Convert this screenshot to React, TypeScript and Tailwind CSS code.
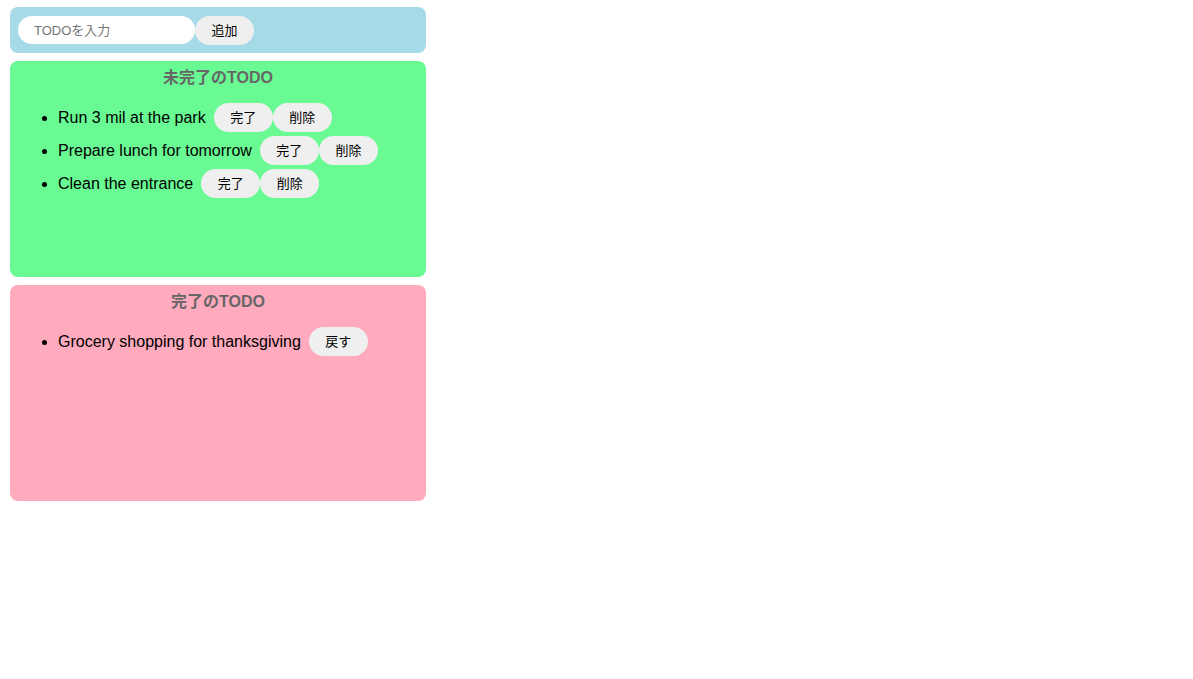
import React, { useState } from 'react';

const font = { fontFamily: '"Liberation Sans", "Noto Sans CJK JP", sans-serif' };

const btn =
  'h-[29px] rounded-full bg-[#efefef] px-[16.5px] text-[13px] leading-none text-black border-none';

const App = () => {
  const [text, setText] = useState('');
  const [incomplete, setIncomplete] = useState<string[]>([
    'Run 3 mil at the park',
    'Prepare lunch for tomorrow',
    'Clean the entrance',
  ]);
  const [complete, setComplete] = useState<string[]>(['Grocery shopping for thanksgiving']);

  const add = () => {
    if (!text) return;
    setIncomplete([...incomplete, text]);
    setText('');
  };

  const remove = (i: number) => setIncomplete(incomplete.filter((_, idx) => idx !== i));

  const done = (i: number) => {
    setComplete([...complete, incomplete[i]]);
    remove(i);
  };

  const back = (i: number) => {
    setIncomplete([...incomplete, complete[i]]);
    setComplete(complete.filter((_, idx) => idx !== i));
  };

  return (
    <div className="min-h-screen bg-white pl-[10px] pt-[7px] text-base text-black" style={font}>
      <div className="flex h-[46px] w-[416px] items-center rounded-lg bg-[#a6dae7] px-2">
        <input
          className="h-[28px] w-[177px] rounded-full border-none bg-white px-4 text-[13px] outline-none placeholder:text-[#757575]"
          placeholder="TODOを入力"
          value={text}
          onChange={(e) => setText(e.target.value)}
        />
        <button className={btn + ' h-[28px] w-[59px]'} onClick={add}>
          追加
        </button>
      </div>

      <div className="mt-2 min-h-[216px] w-[416px] rounded-lg bg-[#69fa93] p-2">
        <p className="text-center font-bold leading-[18px] text-[#666]">未完了のTODO</p>
        <ul className="my-4 list-disc pl-10">
          {incomplete.map((todo, i) => (
            <li key={todo} className="pb-1">
              <div className="flex items-center">
                <span className="mr-2">{todo}</span>
                <button className={btn} onClick={() => done(i)}>
                  完了
                </button>
                <button className={btn} onClick={() => remove(i)}>
                  削除
                </button>
              </div>
            </li>
          ))}
        </ul>
      </div>

      <div className="mt-2 min-h-[216px] w-[416px] rounded-lg bg-[#ffaabd] p-2">
        <p className="text-center font-bold leading-[18px] text-[#666]">完了のTODO</p>
        <ul className="my-4 list-disc pl-10">
          {complete.map((todo, i) => (
            <li key={todo} className="pb-1">
              <div className="flex items-center">
                <span className="mr-2">{todo}</span>
                <button className={btn} onClick={() => back(i)}>
                  戻す
                </button>
              </div>
            </li>
          ))}
        </ul>
      </div>
    </div>
  );
};

export default App;
